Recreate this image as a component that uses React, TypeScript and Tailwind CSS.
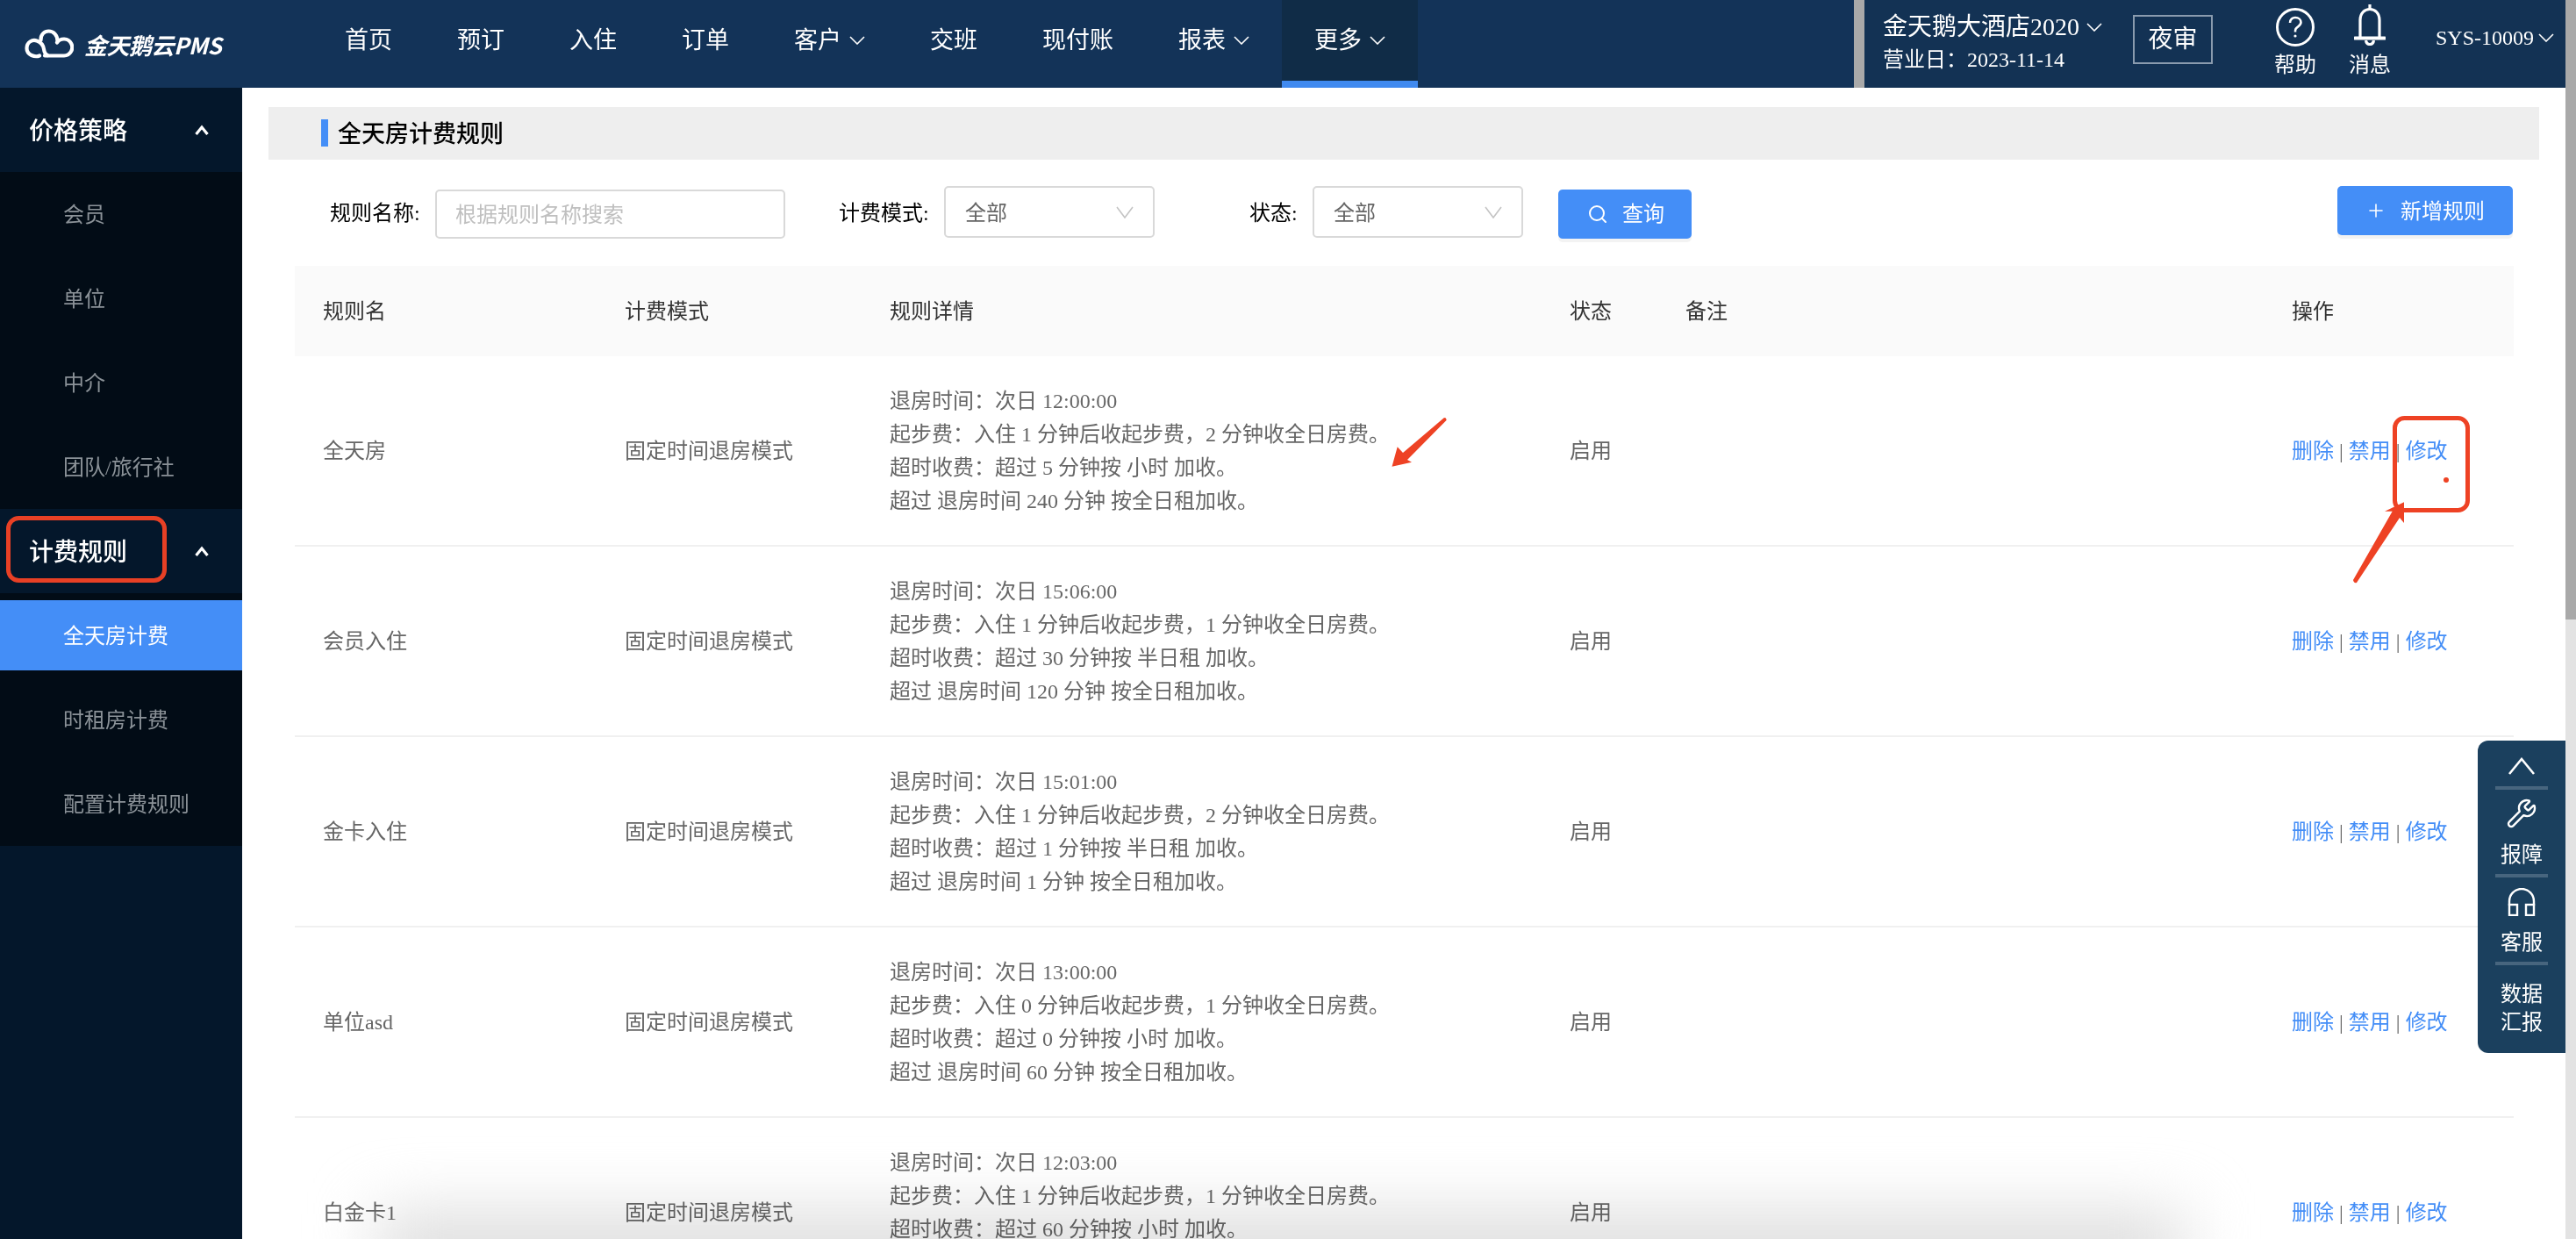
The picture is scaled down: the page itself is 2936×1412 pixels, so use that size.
import React from "react";
import { Search, Plus, Wrench } from "lucide-react";

const Caret = ({ className = "" }: { className?: string }) => (
  <svg viewBox="0 0 18 10" className={"w-[18px] h-[10px] " + className} fill="none" stroke="currentColor" strokeWidth="1.6">
    <polyline points="1,1 9,9 17,1" />
  </svg>
);

const ChevUp = () => (
  <svg viewBox="0 0 16 12" className="w-[16px] h-[12px]" fill="none" stroke="#fff" strokeWidth="3.2">
    <polyline points="1.5,11 8,3 14.5,11" />
  </svg>
);

const Logo = () => (
  <svg viewBox="0 0 56 34" className="w-[56px] h-[34px]" fill="none" stroke="#fff" strokeWidth="4.2" strokeLinecap="round">
    <path d="M23 30.5 H45 A9.5 9.5 0 1 0 37 15.5" />
    <path d="M18.5 13 C18 6 23 2.5 27.5 2.5 C33 2.5 37.5 7 37.5 13.5" />
    <path d="M17 30.5 C12 32.5 2.5 30 2.5 22 C2.5 15 9 11.5 14 13.5 C20 15.5 21.5 20 22 23 C22.5 27 24 29 26 30" />
  </svg>
);

const HelpIcon = () => (
  <svg viewBox="0 0 44 44" className="w-[44px] h-[44px]" fill="none" stroke="#fff" strokeWidth="3">
    <circle cx="22" cy="22" r="20.5" />
    <path d="M16 17 C16 13 19 11 22 11 C26 11 28.5 13.5 28.5 16.5 C28.5 20 24 21.5 22.5 24 C22 25 22 26 22 27.5" strokeWidth="2.6" />
    <circle cx="22" cy="32" r="1.6" fill="#fff" stroke="none" />
  </svg>
);

const BellIcon = () => (
  <svg viewBox="0 0 36 48" className="w-[36px] h-[48px]" fill="none" stroke="#fff" strokeWidth="3.2">
    <path d="M18 1 V7" />
    <path d="M7 38 V19 C7 11 12 6.5 18 6.5 C24 6.5 29 11 29 19 V38" />
    <path d="M1 39.5 H35" strokeWidth="4" strokeLinecap="round" />
    <path d="M13.5 42 C14 45.5 16 46.5 18 46.5 C20 46.5 22 45.5 22.5 42" />
  </svg>
);

const Headset = () => (
  <svg viewBox="0 0 32 32" className="w-[32px] h-[32px]" fill="none" stroke="#fff" strokeWidth="2.4">
    <path d="M2 20 V15 A14 14 0 0 1 30 15 V20" />
    <rect x="2" y="19" width="9" height="12" />
    <rect x="21" y="19" width="9" height="12" />
  </svg>
);

const navItems: { t: string; caret?: boolean; active?: boolean }[] = [
  { t: "首页" },
  { t: "预订" },
  { t: "入住" },
  { t: "订单" },
  { t: "客户", caret: true },
  { t: "交班" },
  { t: "现付账" },
  { t: "报表", caret: true },
  { t: "更多", caret: true, active: true },
];

const rows = [
  { name: "全天房", d: ["退房时间：次日 12:00:00", "起步费：入住 1 分钟后收起步费，2 分钟收全日房费。", "超时收费：超过 5 分钟按 小时 加收。", "超过 退房时间 240 分钟 按全日租加收。"] },
  { name: "会员入住", d: ["退房时间：次日 15:06:00", "起步费：入住 1 分钟后收起步费，1 分钟收全日房费。", "超时收费：超过 30 分钟按 半日租 加收。", "超过 退房时间 120 分钟 按全日租加收。"] },
  { name: "金卡入住", d: ["退房时间：次日 15:01:00", "起步费：入住 1 分钟后收起步费，2 分钟收全日房费。", "超时收费：超过 1 分钟按 半日租 加收。", "超过 退房时间 1 分钟 按全日租加收。"] },
  { name: "单位asd", d: ["退房时间：次日 13:00:00", "起步费：入住 0 分钟后收起步费，1 分钟收全日房费。", "超时收费：超过 0 分钟按 小时 加收。", "超过 退房时间 60 分钟 按全日租加收。"] },
  { name: "白金卡1", d: ["退房时间：次日 12:03:00", "起步费：入住 1 分钟后收起步费，1 分钟收全日房费。", "超时收费：超过 60 分钟按 小时 加收。", ""] },
];

const SideHead = ({ t }: { t: string }) => (
  <div className="h-[96px] bg-[#04172b] flex items-center justify-between pl-[33px] pr-[38px] text-[28px] text-white font-medium">
    <span className="pt-[3px]">{t}</span>
    <ChevUp />
  </div>
);

const SideItem = ({ t, active }: { t: string; active?: boolean }) => (
  <div className={active ? "h-[96px] bg-[#020c16] py-2" : "h-[96px] bg-[#020c16]"}>
    <div className={active ? "h-full flex items-center pl-[72px] pt-[2px] text-[24px] text-white bg-[#448ef7]" : "h-full flex items-center pl-[72px] pt-[2px] text-[24px] text-[#8b9298]"}>{t}</div>
  </div>
);

const Select = () => (
  <div className="w-[240px] h-[59px] border-2 border-[#d9d9d9] rounded-[5px] flex items-center justify-between pl-[22px] pr-[22px] text-[24px] text-[#666]">
    <span className="pt-[2px]">全部</span>
    <svg viewBox="0 0 20 14" className="w-[20px] h-[14px]" fill="none" stroke="#c4c4c4" strokeWidth="1.6">
      <polyline points="1,1 10,13 19,1" />
    </svg>
  </div>
);

export default function App() {
  return (
    <div className="relative flex h-[1412px] w-full overflow-hidden bg-white font-['Liberation_Serif','Noto_Sans_CJK_SC',serif]">
      <div className="flex-1 min-w-0 flex flex-col">
        <header className="h-[100px] flex bg-[#133358] text-white shrink-0">
          <div className="w-[356px] flex items-center shrink-0 pl-[28px] gap-[12px]">
            <Logo />
            <span className="font-['Noto_Sans_CJK_SC',sans-serif] font-bold italic text-[26px] tracking-[-0.5px] whitespace-nowrap">金天鹅云PMS</span>
          </div>
          <nav className="flex">
            {navItems.map((n) => (
              <div
                key={n.t}
                className={
                  n.active
                    ? "h-[100px] pl-[37px] pr-[37px] pb-0 flex items-center gap-[9px] bg-[#102c47] border-b-8 border-[#408af0] text-[27px] whitespace-nowrap"
                    : "h-[100px] px-[37px] pb-[8px] flex items-center gap-[9px] text-[27px] whitespace-nowrap"
                }
              >
                <span>{n.t}</span>
                {n.caret && <Caret />}
              </div>
            ))}
          </nav>
          <div className="ml-auto w-[12px] bg-[#a9a9a9] shrink-0" />
          <div className="w-[799px] shrink-0 flex items-center bg-[#133254] pl-[21px]">
            <div className="w-[285px] flex flex-col">
              <div className="flex items-center gap-[8px] text-[28px] leading-[36px] h-[36px] mt-[-1px] whitespace-nowrap">
                <span>金天鹅大酒店2020</span>
                <Caret />
              </div>
              <div className="text-[24px] leading-[36px] mt-[1px] whitespace-nowrap">营业日：2023-11-14</div>
            </div>
            <div className="w-[91px] h-[56px] border-2 border-[#8a9bae] flex items-center justify-center text-[28px] mt-[-10px]">夜审</div>
            <div className="ml-[70px] w-[48px] flex flex-col items-center mt-[-2px]">
              <HelpIcon />
              <span className="text-[24px] leading-[32px] mt-[5px] whitespace-nowrap">帮助</span>
            </div>
            <div className="ml-[37px] w-[48px] flex flex-col items-center mt-[-4px]">
              <div className="mt-[-3px]"><BellIcon /></div>
              <span className="text-[24px] leading-[32px] mt-[6px] whitespace-nowrap">消息</span>
            </div>
            <div className="ml-[51px] flex items-center gap-[5px] text-[24px] mt-[-14px] whitespace-nowrap">
              <span>SYS-10009</span>
              <Caret />
            </div>
          </div>
        </header>
        <div className="flex-1 flex min-h-0">
          <aside className="w-[276px] shrink-0 bg-[#04172b]">
            <SideHead t="价格策略" />
            <SideItem t="会员" />
            <SideItem t="单位" />
            <SideItem t="中介" />
            <SideItem t="团队/旅行社" />
            <SideHead t="计费规则" />
            <SideItem t="全天房计费" active />
            <SideItem t="时租房计费" />
            <SideItem t="配置计费规则" />
          </aside>
          <main className="flex-1 min-w-0">
            <div className="mt-[22px] ml-[30px] mr-[30px] h-[60px] bg-[#eeeeee] flex items-center pl-[60px]">
              <span className="w-[8px] h-[31px] bg-[#448ef7] mr-[11px] mt-[-1px]" />
              <span className="text-[27px] text-black font-medium pt-[2px]">全天房计费规则</span>
            </div>
            <div className="mt-[30px] h-[60px] flex items-start pl-[100px] pr-[60px] text-[24px] text-black">
              <span className="h-[60px] pt-[2px] flex items-center whitespace-nowrap w-[103px]">规则名称:</span>
              <input
                readOnly
                placeholder="根据规则名称搜索"
                className="ml-[17px] mt-[4px] w-[399px] h-[56px] border-2 border-[#d9d9d9] rounded-[5px] pl-[21px] pt-[2px] text-[24px] outline-none placeholder:text-[#bfbfbf]"
              />
              <span className="ml-[61px] h-[60px] pt-[2px] flex items-center whitespace-nowrap w-[103px]">计费模式:</span>
              <div className="ml-[17px]"><Select /></div>
              <span className="ml-[108px] h-[60px] pt-[2px] flex items-center whitespace-nowrap w-[55px]">状态:</span>
              <div className="ml-[17px]"><Select /></div>
              <div className="ml-[40px] mt-[4px] w-[152px] h-[56px] rounded-[5px] bg-[#448ef7] text-white flex items-center pl-[33px] gap-[16px] shadow-[0_4px_0_#f3f3f3]">
                <Search size={24} strokeWidth={2} />
                <span>查询</span>
              </div>
              <div className="ml-auto w-[200px] h-[56px] rounded-[5px] bg-[#448ef7] text-white flex items-center pl-[32px] gap-[16px] shadow-[0_4px_0_#f3f3f3]">
                <Plus size={24} strokeWidth={1.6} />
                <span className="pt-[2px]">新增规则</span>
              </div>
            </div>
            <div className="mt-[31px] ml-[60px] mr-[59px] text-[24px]">
              <div className="h-[103px] bg-[#fafafa] flex items-center text-[#333]">
                <div className="w-[344px] pl-[32px]">规则名</div>
                <div className="w-[302px] pl-[32px]">计费模式</div>
                <div className="w-[775px] pl-[32px]">规则详情</div>
                <div className="w-[132px] pl-[32px]">状态</div>
                <div className="w-[691px] pl-[32px]">备注</div>
                <div className="flex-1 pl-[32px]">操作</div>
              </div>
              {rows.map((r) => (
                <div key={r.name} className="h-[217px] border-b-2 border-[#f0f0f0] flex items-center text-[#666]">
                  <div className="w-[344px] pl-[32px]">{r.name}</div>
                  <div className="w-[302px] pl-[32px]">固定时间退房模式</div>
                  <div className="w-[775px] pl-[32px] pt-[1px] leading-[38px]">
                    {r.d.map((l, i) => (
                      <div key={i} className="h-[38px] whitespace-nowrap">{l}</div>
                    ))}
                  </div>
                  <div className="w-[132px] pl-[32px]">启用</div>
                  <div className="w-[691px] pl-[32px]" />
                  <div className="flex-1 pl-[32px] whitespace-pre">
                    <span className="text-[#448ef7]">删除</span> | <span className="text-[#448ef7]">禁用</span> | <span className="text-[#448ef7]">修改</span>
                  </div>
                </div>
              ))}
            </div>
          </main>
        </div>
      </div>
      <div className="w-[12px] shrink-0 bg-[#e3e3e3]">
        <div className="h-[706px] bg-[#a9a9a9]" />
      </div>

      <div className="absolute right-[12px] top-[844px] w-[100px] h-[356px] bg-[#1b405e] rounded-l-[12px] flex flex-col items-center text-white text-[24px]">
        <div className="h-[52px] flex items-center pt-[6px]">
          <svg viewBox="0 0 30 20" className="w-[30px] h-[20px]" fill="none" stroke="#fff" strokeWidth="2.6">
            <polyline points="1,19 15,2 29,19" />
          </svg>
        </div>
        <div className="w-[60px] h-[4px] bg-[#47657e] shrink-0" />
        <div className="h-[96px] flex flex-col items-center pt-[9px]">
          <Wrench size={36} strokeWidth={1.6} color="#fff" />
          <span className="leading-[32px] mt-[13px]">报障</span>
        </div>
        <div className="w-[60px] h-[4px] bg-[#47657e] shrink-0" />
        <div className="h-[96px] flex flex-col items-center pt-[12px]">
          <Headset />
          <span className="leading-[32px] mt-[14px]">客服</span>
        </div>
        <div className="w-[60px] h-[4px] bg-[#47657e] shrink-0" />
        <div className="pt-[17px] leading-[32px] text-center">
          <div>数据</div>
          <div>汇报</div>
        </div>
      </div>

      <div className="pointer-events-none absolute left-[430px] w-[2060px] bottom-[-50px] h-[80px] bg-[#dcdcdc] blur-[36px] mix-blend-multiply" />

      <svg className="pointer-events-none absolute left-0 top-0 w-[2936px] h-[1412px]" viewBox="0 0 2936 1412" fill="none">
        <rect x="9.5" y="590.5" width="178" height="71" rx="12" stroke="#e84025" strokeWidth="5" />
        <rect x="2729.5" y="476.5" width="83" height="105" rx="11" stroke="#ee4224" strokeWidth="5" />
        <circle cx="2788" cy="547" r="3" fill="#ee4224" />
        <path d="M2682 661 L2726.7 582.7 L2718 582.7 L2740 572.3 L2740 596 L2735 590 L2686 664 Q2683 665 2682 661 Z" fill="#ee4224" />
        <path d="M1646 476 L1599 516 L1592.7 509.3 L1586.5 531.7 L1609 526.7 L1604 524 L1648.5 479 Q1649 476 1646 476 Z" fill="#ee4224" />
      </svg>
    </div>
  );
}
